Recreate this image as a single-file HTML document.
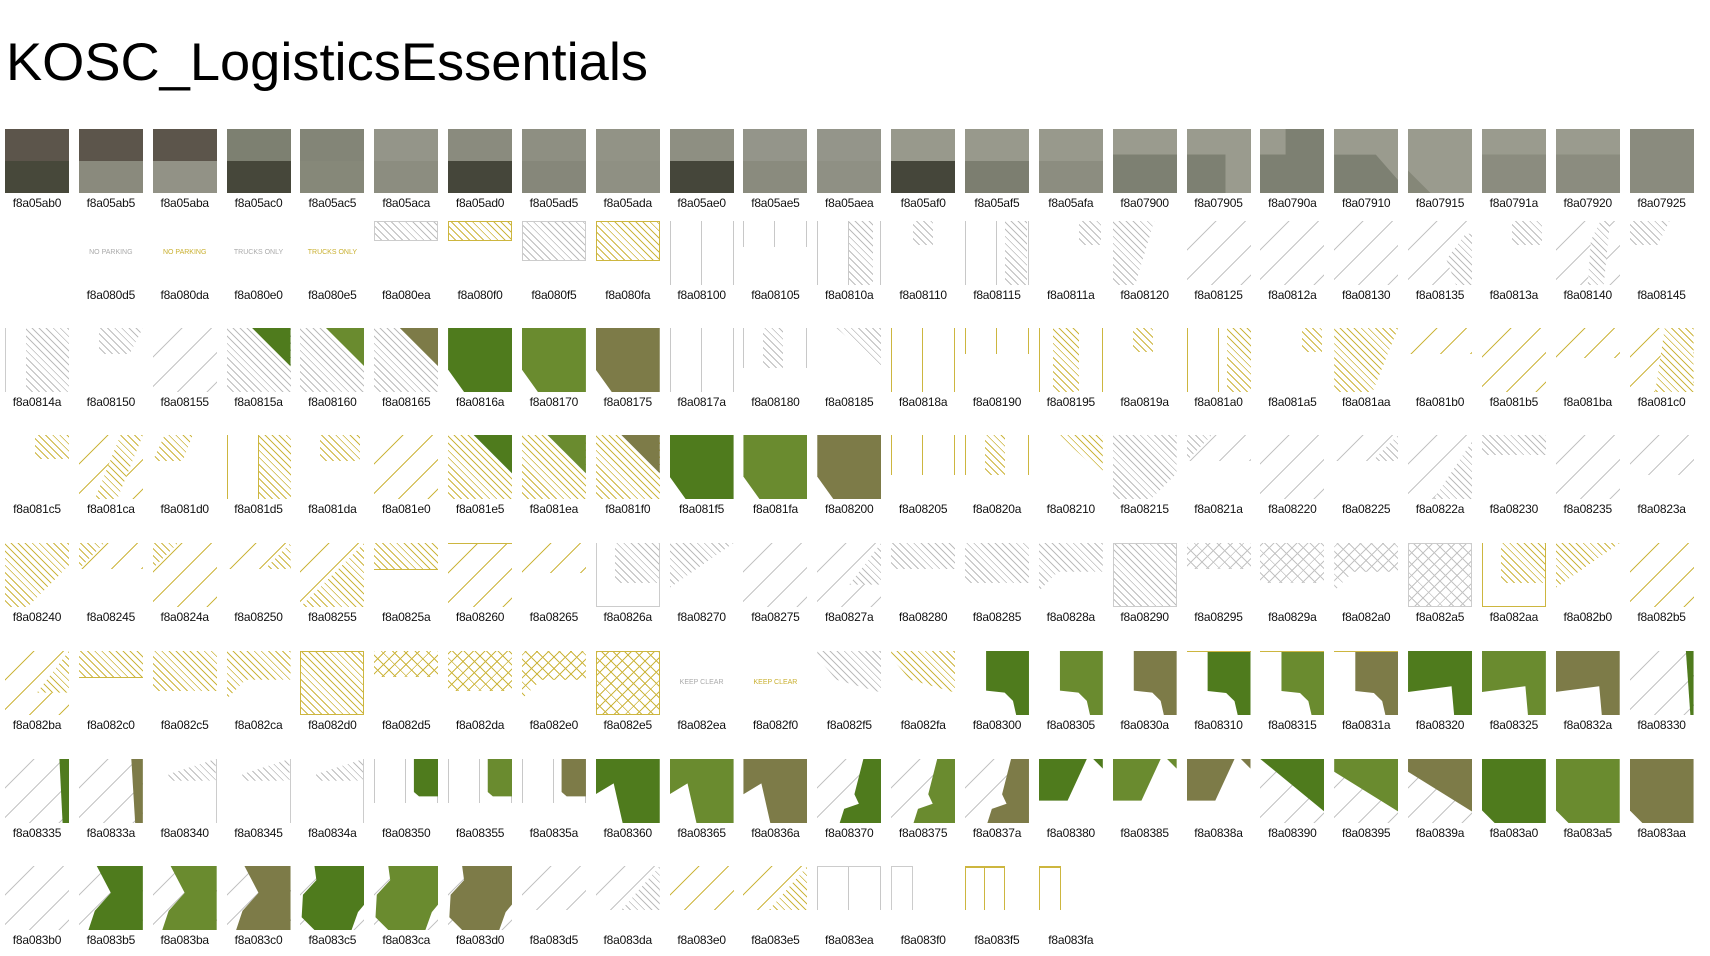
<!DOCTYPE html>
<html><head><meta charset="utf-8"><style>
body{margin:0;width:1710px;height:951px;background:#fff;overflow:hidden;position:relative;font-family:"Liberation Sans",sans-serif}
.r{position:absolute;left:5px;display:flex}
.c{width:73.85px;flex:none;position:relative;height:90px}
.c i{position:absolute;left:0;top:0;width:64px;height:64px;display:block;overflow:hidden}
.c b{position:absolute;left:-5px;width:74px;top:66px;font-weight:normal;font-size:12px;line-height:16px;text-align:center;color:#111;letter-spacing:-0.2px}
.c i u,.c i s{position:absolute;display:block;left:0;top:0;width:100%;height:100%}
.g1{background:#4f7b1d}.g2{background:#6a8b2f}.g3{background:#7d7b48}
.h{background:repeating-linear-gradient(45deg,#fff 0 4px,#bdbdbd 4px 5px)}
.hg{background:repeating-linear-gradient(45deg,#fff 0 4px,#cdb63f 4px 5px)}
.x{background:repeating-linear-gradient(45deg,transparent 0 7px,#c4c4c4 7px 8px),repeating-linear-gradient(-45deg,#fff 0 7px,#c4c4c4 7px 8px)}
.xg{background:repeating-linear-gradient(45deg,transparent 0 7px,#cdb63f 7px 8px),repeating-linear-gradient(-45deg,#fff 0 7px,#cdb63f 7px 8px)}
.d{background:repeating-linear-gradient(135deg,#fff 0 20px,#c4c4c4 20px 21px)}
.dg{background:repeating-linear-gradient(135deg,#fff 0 20px,#cdb63f 20px 21px)}
.v{background:linear-gradient(90deg,#c8c8c8 1px,transparent 1px,transparent 31px,#c8c8c8 31px,#c8c8c8 32px,transparent 32px,transparent 63px,#c8c8c8 63px)}
.vg{background:linear-gradient(90deg,#cdb63f 1px,transparent 1px,transparent 31px,#cdb63f 31px,#cdb63f 32px,transparent 32px,transparent 63px,#cdb63f 63px)}
.t{font-size:7px;line-height:64px;text-align:center;color:#aaa;font-style:normal;letter-spacing:0}
.tg{color:#c9b030}
.s{background:linear-gradient(var(--a) 50%,var(--b) 50%)}
</style></head><body>
<svg style="position:absolute;left:0;top:0" width="700" height="100"><text x="6" y="80" font-family="Liberation Sans, sans-serif" font-size="53" textLength="642" lengthAdjust="spacingAndGlyphs" fill="#000">KOSC_LogisticsEssentials</text></svg>

<div class="r" style="top:129px">
<div class="c"><i class="s" style="--a:#5c554b;--b:#47483a"></i><b>f8a05ab0</b></div>
<div class="c"><i class="s" style="--a:#5c554b;--b:#8a8a7d"></i><b>f8a05ab5</b></div>
<div class="c"><i class="s" style="--a:#5c554b;--b:#929286"></i><b>f8a05aba</b></div>
<div class="c"><i class="s" style="--a:#7d8071;--b:#46473a"></i><b>f8a05ac0</b></div>
<div class="c"><i class="s" style="--a:#838577;--b:#868879"></i><b>f8a05ac5</b></div>
<div class="c"><i class="s" style="--a:#949589;--b:#8c8d80"></i><b>f8a05aca</b></div>
<div class="c"><i class="s" style="--a:#8a8b7e;--b:#45463a"></i><b>f8a05ad0</b></div>
<div class="c"><i class="s" style="--a:#8e8f82;--b:#86877a"></i><b>f8a05ad5</b></div>
<div class="c"><i class="s" style="--a:#929386;--b:#8f9083"></i><b>f8a05ada</b></div>
<div class="c"><i class="s" style="--a:#8e8f82;--b:#45463a"></i><b>f8a05ae0</b></div>
<div class="c"><i class="s" style="--a:#94958a;--b:#8a8b7e"></i><b>f8a05ae5</b></div>
<div class="c"><i class="s" style="--a:#94958a;--b:#8f9084"></i><b>f8a05aea</b></div>
<div class="c"><i class="s" style="--a:#98998c;--b:#45463a"></i><b>f8a05af0</b></div>
<div class="c"><i class="s" style="--a:#98998c;--b:#7c7e70"></i><b>f8a05af5</b></div>
<div class="c"><i class="s" style="--a:#98998c;--b:#8c8d80"></i><b>f8a05afa</b></div>
<div class="c"><i style="background:linear-gradient(#9a9b8e 40%,#7d8072 40%)"></i><b>f8a07900</b></div>
<div class="c"><i style="background:linear-gradient(90deg,transparent 60%,#9a9b8e 60%),linear-gradient(#9a9b8e 40%,#7d8072 40%)"></i><b>f8a07905</b></div>
<div class="c"><i style="background:linear-gradient(#9a9b8e 40%,transparent 40%) 0 0/40% 100% no-repeat,#7d8072"></i><b>f8a0790a</b></div>
<div class="c"><i style="background:#9a9b8e"><u style="background:#7d8072;clip-path:polygon(0 40%,65% 40%,100% 80%,100% 100%,0 100%)"></u></i><b>f8a07910</b></div>
<div class="c"><i style="background:#9a9b8e"><u style="background:#858778;clip-path:polygon(0 65%,35% 100%,0 100%)"></u></i><b>f8a07915</b></div>
<div class="c"><i style="background:linear-gradient(#9a9b8e 40%,#8b8c7f 40%)"></i><b>f8a0791a</b></div>
<div class="c"><i style="background:linear-gradient(#9a9b8e 40%,#8b8c7f 40%)"></i><b>f8a07920</b></div>
<div class="c"><i style="background:#8a8b7e"></i><b>f8a07925</b></div>
</div>

<div class="r" style="top:221px">
<div class="c"></div>
<div class="c"><i class="t">NO PARKING</i><b>f8a080d5</b></div>
<div class="c"><i class="t tg">NO PARKING</i><b>f8a080da</b></div>
<div class="c"><i class="t">TRUCKS ONLY</i><b>f8a080e0</b></div>
<div class="c"><i class="t tg">TRUCKS ONLY</i><b>f8a080e5</b></div>
<div class="c"><i><s class="h" style="height:20px;border:1px solid #ccc;box-sizing:border-box"></s></i><b>f8a080ea</b></div>
<div class="c"><i><s class="hg" style="height:20px;border:1px solid #cdb63f;box-sizing:border-box"></s></i><b>f8a080f0</b></div>
<div class="c"><i><s class="h" style="height:40px;border:1px solid #ccc;box-sizing:border-box"></s></i><b>f8a080f5</b></div>
<div class="c"><i><s class="hg" style="height:40px;border:1px solid #cdb63f;box-sizing:border-box"></s></i><b>f8a080fa</b></div>
<div class="c"><i class="v"></i><b>f8a08100</b></div>
<div class="c"><i class="v" style="height:26px"></i><b>f8a08105</b></div>
<div class="c"><i class="v"><s class="h" style="left:32px;width:24px"></s></i><b>f8a0810a</b></div>
<div class="c"><i><s class="h" style="left:22px;width:20px;height:24px"></s></i><b>f8a08110</b></div>
<div class="c"><i class="v"><s class="h" style="left:40px;width:22px"></s></i><b>f8a08115</b></div>
<div class="c"><i><s class="h" style="left:40px;width:22px;height:24px"></s></i><b>f8a0811a</b></div>
<div class="c"><i class="h" style="clip-path:polygon(0 0,65% 0,35% 100%,0 100%)"></i><b>f8a08120</b></div>
<div class="c"><i class="d"></i><b>f8a08125</b></div>
<div class="c"><i class="d"></i><b>f8a0812a</b></div>
<div class="c"><i class="d"></i><b>f8a08130</b></div>
<div class="c"><i class="d"><s class="h" style="clip-path:polygon(60% 60%,90% 20%,100% 20%,100% 100%,75% 100%)"></s></i><b>f8a08135</b></div>
<div class="c"><i><s class="h" style="left:30px;width:30px;height:24px"></s></i><b>f8a0813a</b></div>
<div class="c"><i class="d"><s class="h" style="clip-path:polygon(55% 30%,70% 0,85% 0,75% 100%,50% 100%)"></s></i><b>f8a08140</b></div>
<div class="c"><i><s class="h" style="width:40px;height:24px;clip-path:polygon(0 0,100% 0,70% 100%,0 100%)"></s></i><b>f8a08145</b></div>
</div>

<div class="r" style="top:328px">
<div class="c"><i style="border-left:1px solid #ccc;box-sizing:border-box"><s class="h" style="left:20px;width:44px"></s></i><b>f8a0814a</b></div>
<div class="c"><i><s class="h" style="left:20px;width:44px;height:26px;clip-path:polygon(0 0,100% 0,70% 100%,0 100%)"></s></i><b>f8a08150</b></div>
<div class="c"><i class="d"></i><b>f8a08155</b></div>
<div class="c"><i class="h"><u class="g1" style="clip-path:polygon(40% 0,100% 0,100% 60%)"></u></i><b>f8a0815a</b></div>
<div class="c"><i class="h"><u class="g2" style="clip-path:polygon(40% 0,100% 0,100% 60%)"></u></i><b>f8a08160</b></div>
<div class="c"><i class="h"><u class="g3" style="clip-path:polygon(40% 0,100% 0,100% 60%)"></u></i><b>f8a08165</b></div>
<div class="c"><i><u class="g1" style="clip-path:polygon(0 0,100% 0,100% 100%,25% 100%,0 65%)"></u></i><b>f8a0816a</b></div>
<div class="c"><i><u class="g2" style="clip-path:polygon(0 0,100% 0,100% 100%,25% 100%,0 65%)"></u></i><b>f8a08170</b></div>
<div class="c"><i><u class="g3" style="clip-path:polygon(0 0,100% 0,100% 100%,25% 100%,0 65%)"></u></i><b>f8a08175</b></div>
<div class="c"><i class="v"></i><b>f8a0817a</b></div>
<div class="c"><i class="v" style="height:40px"><s class="h" style="left:20px;width:20px"></s></i><b>f8a08180</b></div>
<div class="c"><i><s class="h" style="clip-path:polygon(30% 0,100% 0,100% 60%)"></s></i><b>f8a08185</b></div>
<div class="c"><i class="vg"></i><b>f8a0818a</b></div>
<div class="c"><i class="vg" style="height:26px"></i><b>f8a08190</b></div>
<div class="c"><i class="vg"><s class="hg" style="left:14px;width:26px"></s></i><b>f8a08195</b></div>
<div class="c"><i><s class="hg" style="left:20px;width:20px;height:24px"></s></i><b>f8a0819a</b></div>
<div class="c"><i class="vg"><s class="hg" style="left:40px;width:24px"></s></i><b>f8a081a0</b></div>
<div class="c"><i><s class="hg" style="left:42px;width:20px;height:24px"></s></i><b>f8a081a5</b></div>
<div class="c"><i class="hg" style="clip-path:polygon(0 0,100% 0,60% 100%,0 100%)"></i><b>f8a081aa</b></div>
<div class="c"><i class="dg" style="height:26px"></i><b>f8a081b0</b></div>
<div class="c"><i class="dg"></i><b>f8a081b5</b></div>
<div class="c"><i class="dg" style="height:30px"></i><b>f8a081ba</b></div>
<div class="c"><i class="dg"><s class="hg" style="clip-path:polygon(55% 0,100% 0,100% 100%,40% 100%)"></s></i><b>f8a081c0</b></div>
</div>

<div class="r" style="top:435px">
<div class="c"><i><s class="hg" style="left:30px;width:34px;height:24px"></s></i><b>f8a081c5</b></div>
<div class="c"><i class="dg"><s class="hg" style="clip-path:polygon(65% 0,100% 0,60% 100%,25% 100%)"></s></i><b>f8a081ca</b></div>
<div class="c"><i><s class="hg" style="width:40px;height:26px;clip-path:polygon(30% 0,100% 0,75% 100%,0 100%)"></s></i><b>f8a081d0</b></div>
<div class="c"><i class="vg"><s class="hg" style="left:32px;width:32px"></s></i><b>f8a081d5</b></div>
<div class="c"><i><s class="hg" style="left:20px;width:40px;height:26px"></s></i><b>f8a081da</b></div>
<div class="c"><i class="dg"></i><b>f8a081e0</b></div>
<div class="c"><i class="hg"><u class="g1" style="clip-path:polygon(40% 0,100% 0,100% 60%)"></u></i><b>f8a081e5</b></div>
<div class="c"><i class="hg"><u class="g2" style="clip-path:polygon(40% 0,100% 0,100% 60%)"></u></i><b>f8a081ea</b></div>
<div class="c"><i class="hg"><u class="g3" style="clip-path:polygon(40% 0,100% 0,100% 60%)"></u></i><b>f8a081f0</b></div>
<div class="c"><i><u class="g1" style="clip-path:polygon(0 0,100% 0,100% 100%,25% 100%,0 65%)"></u></i><b>f8a081f5</b></div>
<div class="c"><i><u class="g2" style="clip-path:polygon(0 0,100% 0,100% 100%,25% 100%,0 65%)"></u></i><b>f8a081fa</b></div>
<div class="c"><i><u class="g3" style="clip-path:polygon(0 0,100% 0,100% 100%,25% 100%,0 65%)"></u></i><b>f8a08200</b></div>
<div class="c"><i class="vg" style="height:40px"></i><b>f8a08205</b></div>
<div class="c"><i class="vg" style="height:40px"><s class="hg" style="left:20px;width:20px"></s></i><b>f8a0820a</b></div>
<div class="c"><i><s class="hg" style="left:20px;width:44px;height:40px;clip-path:polygon(0 0,100% 0,100% 100%)"></s></i><b>f8a08210</b></div>
<div class="c"><i class="h" style="clip-path:polygon(0 0,100% 0,100% 60%,60% 100%,0 100%)"></i><b>f8a08215</b></div>
<div class="c"><i class="d" style="height:26px"><s class="h" style="width:40%;clip-path:polygon(0 0,100% 0,0 100%)"></s></i><b>f8a0821a</b></div>
<div class="c"><i class="d"></i><b>f8a08220</b></div>
<div class="c"><i class="d" style="height:26px"><s class="h" style="left:60%;width:40%;clip-path:polygon(100% 0,100% 100%,0 100%)"></s></i><b>f8a08225</b></div>
<div class="c"><i class="d"><s class="h" style="clip-path:polygon(100% 10%,100% 100%,40% 100%)"></s></i><b>f8a0822a</b></div>
<div class="c"><i><s class="h" style="height:20px"></s></i><b>f8a08230</b></div>
<div class="c"><i class="d"></i><b>f8a08235</b></div>
<div class="c"><i class="d" style="height:40px"></i><b>f8a0823a</b></div>
</div>

<div class="r" style="top:543px">
<div class="c"><i class="hg" style="clip-path:polygon(0 0,100% 0,100% 35%,35% 100%,0 100%)"></i><b>f8a08240</b></div>
<div class="c"><i class="dg" style="height:26px"><s class="hg" style="width:40%;clip-path:polygon(0 0,100% 0,0 100%)"></s></i><b>f8a08245</b></div>
<div class="c"><i class="dg"><s class="hg" style="width:40%;height:40%;clip-path:polygon(0 0,100% 0,0 100%)"></s></i><b>f8a0824a</b></div>
<div class="c"><i class="dg" style="height:26px"><s class="hg" style="left:60%;width:40%;clip-path:polygon(100% 0,100% 100%,0 100%)"></s></i><b>f8a08250</b></div>
<div class="c"><i class="dg"><s class="hg" style="clip-path:polygon(100% 0,100% 100%,0 100%)"></s></i><b>f8a08255</b></div>
<div class="c"><i><s class="hg" style="height:26px;border-bottom:1px solid #cdb63f"></s></i><b>f8a0825a</b></div>
<div class="c"><i class="dg" style="border-top:1px solid #cdb63f;box-sizing:border-box"></i><b>f8a08260</b></div>
<div class="c"><i class="dg" style="height:30px"></i><b>f8a08265</b></div>
<div class="c"><i style="border:1px solid #ccc;border-top:0;box-sizing:border-box"><s class="h" style="left:30%;width:70%;height:64%"></s></i><b>f8a0826a</b></div>
<div class="c"><i class="h" style="clip-path:polygon(0 0,100% 0,0 70%)"></i><b>f8a08270</b></div>
<div class="c"><i class="d"></i><b>f8a08275</b></div>
<div class="c"><i class="d"><s class="h" style="clip-path:polygon(100% 0,100% 65%,50% 65%)"></s></i><b>f8a0827a</b></div>
<div class="c"><i><s class="h" style="height:26px"></s></i><b>f8a08280</b></div>
<div class="c"><i class="h" style="height:40px"></i><b>f8a08285</b></div>
<div class="c"><i class="h" style="clip-path:polygon(0 0,100% 0,100% 45%,30% 45%,0 75%)"></i><b>f8a0828a</b></div>
<div class="c"><i class="h" style="border:1px solid #ccc;box-sizing:border-box"></i><b>f8a08290</b></div>
<div class="c"><i class="x" style="height:26px"></i><b>f8a08295</b></div>
<div class="c"><i class="x" style="height:40px"></i><b>f8a0829a</b></div>
<div class="c"><i class="x" style="clip-path:polygon(0 0,100% 0,100% 45%,30% 45%,0 75%)"></i><b>f8a082a0</b></div>
<div class="c"><i class="x" style="border:1px solid #ccc;box-sizing:border-box"></i><b>f8a082a5</b></div>
<div class="c"><i style="border:1px solid #cdb63f;border-top:0;box-sizing:border-box"><s class="hg" style="left:30%;width:70%;height:64%"></s></i><b>f8a082aa</b></div>
<div class="c"><i class="hg" style="clip-path:polygon(0 0,100% 0,0 70%)"></i><b>f8a082b0</b></div>
<div class="c"><i class="dg"></i><b>f8a082b5</b></div>
</div>

<div class="r" style="top:651px">
<div class="c"><i class="dg"><s class="hg" style="clip-path:polygon(100% 0,100% 65%,50% 65%)"></s></i><b>f8a082ba</b></div>
<div class="c"><i><s class="hg" style="height:26px;border-bottom:1px solid #cdb63f"></s></i><b>f8a082c0</b></div>
<div class="c"><i class="hg" style="height:40px"></i><b>f8a082c5</b></div>
<div class="c"><i class="hg" style="clip-path:polygon(0 0,100% 0,100% 45%,30% 45%,0 75%)"></i><b>f8a082ca</b></div>
<div class="c"><i class="hg" style="border:1px solid #cdb63f;box-sizing:border-box"></i><b>f8a082d0</b></div>
<div class="c"><i class="xg" style="height:26px"></i><b>f8a082d5</b></div>
<div class="c"><i class="xg" style="height:40px"></i><b>f8a082da</b></div>
<div class="c"><i class="xg" style="clip-path:polygon(0 0,100% 0,100% 45%,30% 45%,0 75%)"></i><b>f8a082e0</b></div>
<div class="c"><i class="xg" style="border:1px solid #cdb63f;box-sizing:border-box"></i><b>f8a082e5</b></div>
<div class="c"><i class="t">KEEP CLEAR</i><b>f8a082ea</b></div>
<div class="c"><i class="t tg">KEEP CLEAR</i><b>f8a082f0</b></div>
<div class="c"><i class="h" style="clip-path:polygon(0 0,100% 0,100% 65%,30% 45%,0 10%)"></i><b>f8a082f5</b></div>
<div class="c"><i class="hg" style="clip-path:polygon(0 0,100% 0,100% 65%,30% 45%,0 10%)"></i><b>f8a082fa</b></div>
<div class="c"><i><u class="g1" style="clip-path:polygon(33% 0,100% 0,100% 100%,80% 100%,75% 78%,62% 65%,33% 62%)"></u></i><b>f8a08300</b></div>
<div class="c"><i><u class="g2" style="clip-path:polygon(33% 0,100% 0,100% 100%,80% 100%,75% 78%,62% 65%,33% 62%)"></u></i><b>f8a08305</b></div>
<div class="c"><i><u class="g3" style="clip-path:polygon(33% 0,100% 0,100% 100%,80% 100%,75% 78%,62% 65%,33% 62%)"></u></i><b>f8a0830a</b></div>
<div class="c"><i style="border-top:1px solid #cdb63f;box-sizing:border-box"><u class="g1" style="clip-path:polygon(33% 0,100% 0,100% 100%,80% 100%,75% 78%,62% 65%,33% 62%)"></u></i><b>f8a08310</b></div>
<div class="c"><i style="border-top:1px solid #cdb63f;box-sizing:border-box"><u class="g2" style="clip-path:polygon(33% 0,100% 0,100% 100%,80% 100%,75% 78%,62% 65%,33% 62%)"></u></i><b>f8a08315</b></div>
<div class="c"><i style="border-top:1px solid #cdb63f;box-sizing:border-box"><u class="g3" style="clip-path:polygon(33% 0,100% 0,100% 100%,80% 100%,75% 78%,62% 65%,33% 62%)"></u></i><b>f8a0831a</b></div>
<div class="c"><i><u class="g1" style="clip-path:polygon(0 0,100% 0,100% 100%,72% 100%,68% 55%,0 64%)"></u></i><b>f8a08320</b></div>
<div class="c"><i><u class="g2" style="clip-path:polygon(0 0,100% 0,100% 100%,72% 100%,68% 55%,0 64%)"></u></i><b>f8a08325</b></div>
<div class="c"><i><u class="g3" style="clip-path:polygon(0 0,100% 0,100% 100%,72% 100%,68% 55%,0 64%)"></u></i><b>f8a0832a</b></div>
<div class="c"><i class="d"><u class="g1" style="clip-path:polygon(88% 0,100% 0,100% 100%,95% 100%)"></u></i><b>f8a08330</b></div>
</div>

<div class="r" style="top:759px">
<div class="c"><i class="d"><u class="g1" style="clip-path:polygon(85% 0,100% 0,100% 100%,90% 100%)"></u></i><b>f8a08335</b></div>
<div class="c"><i class="d"><u class="g3" style="clip-path:polygon(82% 0,100% 0,100% 100%,88% 100%)"></u></i><b>f8a0833a</b></div>
<div class="c"><i style="border-right:1px solid #ccc;box-sizing:border-box"><s class="h" style="left:25%;width:75%;height:34%;clip-path:polygon(0 70%,100% 0,100% 100%,0 100%)"></s></i><b>f8a08340</b></div>
<div class="c"><i style="border-right:1px solid #ccc;box-sizing:border-box"><s class="h" style="left:25%;width:75%;height:34%;clip-path:polygon(0 70%,100% 0,100% 100%,0 100%)"></s></i><b>f8a08345</b></div>
<div class="c"><i style="border-right:1px solid #ccc;box-sizing:border-box"><s class="h" style="left:25%;width:75%;height:34%;clip-path:polygon(0 70%,100% 0,100% 100%,0 100%)"></s></i><b>f8a0834a</b></div>
<div class="c"><i class="v" style="height:44px"><u class="g1" style="clip-path:polygon(62% 0,100% 0,100% 85%,70% 85%,62% 75%)"></u></i><b>f8a08350</b></div>
<div class="c"><i class="v" style="height:44px"><u class="g2" style="clip-path:polygon(62% 0,100% 0,100% 85%,70% 85%,62% 75%)"></u></i><b>f8a08355</b></div>
<div class="c"><i class="v" style="height:44px"><u class="g3" style="clip-path:polygon(62% 0,100% 0,100% 85%,70% 85%,62% 75%)"></u></i><b>f8a0835a</b></div>
<div class="c"><i><u class="g1" style="clip-path:polygon(0 0,100% 0,100% 100%,42% 100%,28% 38%,0 55%)"></u></i><b>f8a08360</b></div>
<div class="c"><i><u class="g2" style="clip-path:polygon(0 0,100% 0,100% 100%,42% 100%,28% 38%,0 55%)"></u></i><b>f8a08365</b></div>
<div class="c"><i><u class="g3" style="clip-path:polygon(0 0,100% 0,100% 100%,42% 100%,28% 38%,0 55%)"></u></i><b>f8a0836a</b></div>
<div class="c"><i class="d"><u class="g1" style="clip-path:polygon(72% 0,100% 0,100% 100%,35% 100%,42% 78%,65% 70%,58% 55%)"></u></i><b>f8a08370</b></div>
<div class="c"><i class="d"><u class="g2" style="clip-path:polygon(72% 0,100% 0,100% 100%,35% 100%,42% 78%,65% 70%,58% 55%)"></u></i><b>f8a08375</b></div>
<div class="c"><i class="d"><u class="g3" style="clip-path:polygon(72% 0,100% 0,100% 100%,35% 100%,42% 78%,65% 70%,58% 55%)"></u></i><b>f8a0837a</b></div>
<div class="c"><i><u class="g1" style="clip-path:polygon(0 0,75% 0,45% 65%,0 65%)"></u><u class="g1" style="clip-path:polygon(85% 0,100% 0,100% 15%)"></u></i><b>f8a08380</b></div>
<div class="c"><i><u class="g2" style="clip-path:polygon(0 0,75% 0,45% 65%,0 65%)"></u><u class="g2" style="clip-path:polygon(85% 0,100% 0,100% 15%)"></u></i><b>f8a08385</b></div>
<div class="c"><i><u class="g3" style="clip-path:polygon(0 0,75% 0,45% 65%,0 65%)"></u><u class="g3" style="clip-path:polygon(85% 0,100% 0,100% 15%)"></u></i><b>f8a0838a</b></div>
<div class="c"><i class="d"><u class="g1" style="clip-path:polygon(0 0,100% 0,100% 82%)"></u></i><b>f8a08390</b></div>
<div class="c"><i class="d"><u class="g2" style="clip-path:polygon(0 0,100% 0,100% 82%,0 20%)"></u></i><b>f8a08395</b></div>
<div class="c"><i class="d"><u class="g3" style="clip-path:polygon(0 0,100% 0,100% 82%,0 20%)"></u></i><b>f8a0839a</b></div>
<div class="c"><i><u class="g1" style="clip-path:polygon(0 0,100% 0,100% 100%,20% 100%,0 80%)"></u></i><b>f8a083a0</b></div>
<div class="c"><i><u class="g2" style="clip-path:polygon(0 0,100% 0,100% 100%,20% 100%,0 80%)"></u></i><b>f8a083a5</b></div>
<div class="c"><i><u class="g3" style="clip-path:polygon(0 0,100% 0,100% 100%,20% 100%,0 80%)"></u></i><b>f8a083aa</b></div>
</div>

<div class="r" style="top:866px">
<div class="c"><i class="d"></i><b>f8a083b0</b></div>
<div class="c"><i class="d"><u class="g1" style="clip-path:polygon(28% 0,100% 0,100% 100%,15% 100%,25% 70%,50% 42%)"></u></i><b>f8a083b5</b></div>
<div class="c"><i class="d"><u class="g2" style="clip-path:polygon(28% 0,100% 0,100% 100%,15% 100%,25% 70%,50% 42%)"></u></i><b>f8a083ba</b></div>
<div class="c"><i class="d"><u class="g3" style="clip-path:polygon(28% 0,100% 0,100% 100%,15% 100%,25% 70%,50% 42%)"></u></i><b>f8a083c0</b></div>
<div class="c"><i class="d"><u class="g1" style="clip-path:polygon(22% 0,100% 0,100% 60%,90% 72%,80% 100%,22% 100%,2% 80%,4% 45%,25% 22%)"></u></i><b>f8a083c5</b></div>
<div class="c"><i class="d"><u class="g2" style="clip-path:polygon(22% 0,100% 0,100% 60%,90% 72%,80% 100%,22% 100%,2% 80%,4% 45%,25% 22%)"></u></i><b>f8a083ca</b></div>
<div class="c"><i class="d"><u class="g3" style="clip-path:polygon(22% 0,100% 0,100% 60%,90% 72%,80% 100%,22% 100%,2% 80%,4% 45%,25% 22%)"></u></i><b>f8a083d0</b></div>
<div class="c"><i class="d" style="height:44px"></i><b>f8a083d5</b></div>
<div class="c"><i class="d" style="height:44px"><s class="h" style="clip-path:polygon(100% 0,100% 100%,40% 100%)"></s></i><b>f8a083da</b></div>
<div class="c"><i class="dg" style="height:44px"></i><b>f8a083e0</b></div>
<div class="c"><i class="dg" style="height:44px"><s class="hg" style="clip-path:polygon(100% 0,100% 100%,40% 100%)"></s></i><b>f8a083e5</b></div>
<div class="c"><i class="v" style="height:44px;border-top:1px solid #ccc;box-sizing:border-box"></i><b>f8a083ea</b></div>
<div class="c"><i style="height:44px;width:22px;border:1px solid #ccc;border-bottom:0;box-sizing:border-box"></i><b>f8a083f0</b></div>
<div class="c"><i class="vg" style="height:44px;border-top:2px solid #cdb63f;box-sizing:border-box;width:40px;background:linear-gradient(90deg,#cdb63f 1px,transparent 1px,transparent 19px,#cdb63f 19px,#cdb63f 20px,transparent 20px,transparent 39px,#cdb63f 39px)"></i><b>f8a083f5</b></div>
<div class="c"><i style="height:44px;width:22px;border:1px solid #cdb63f;border-top-width:2px;border-bottom:0;box-sizing:border-box"></i><b>f8a083fa</b></div>
</div>
</body></html>
